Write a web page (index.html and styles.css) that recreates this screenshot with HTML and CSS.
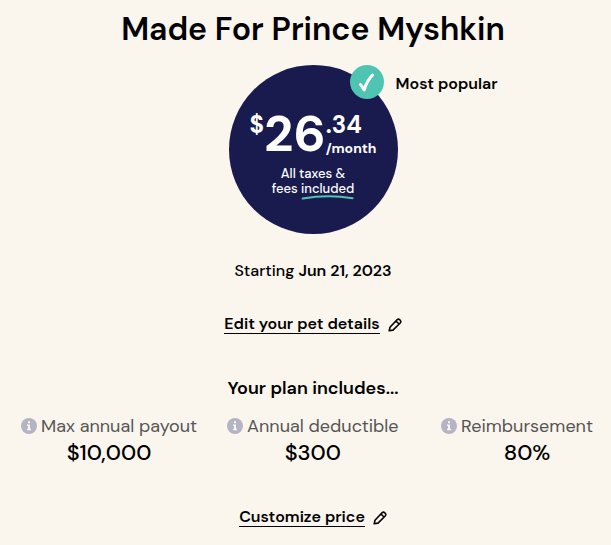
FILE: index.html
```html
<!DOCTYPE html>
<html lang="en">
<head>
  <meta charset="UTF-8" />
  <meta name="viewport" content="width=device-width, initial-scale=1.0" />
  <title>Made For Prince Myshkin</title>
  <link rel="stylesheet" href="styles.css">
</head>
<body>
  <main class="quote">
    <h1>Made For Prince Myshkin</h1>
    <div class="price-circle">
      <div class="price">
        <span class="currency">$</span>
        <span class="dollars">26</span>
        <span class="price-side">
          <span class="cents">.34</span>
          <span class="period">/month</span>
        </span>
      </div>
      <p class="taxes">All taxes &amp;<br>fees <span class="included">included<svg class="swoosh" viewBox="0 0 52 5" aria-hidden="true"><path d="M1 3.6Q26-.8 51 3.2" /></svg></span></p>
      <div class="popular">
        <svg class="check" viewBox="0 0 34 34" aria-hidden="true">
          <circle cx="17" cy="17" r="17" />
          <path d="M10.5 19.5L14.2 24.8Q16.5 16.5 22.5 10" />
        </svg>
        <span>Most popular</span>
      </div>
    </div>
    <p class="starting"><span>Starting</span> <strong>Jun 21, 2023</strong></p>
    <a href="#pet" class="edit-link edit-pet">
      <span>Edit your pet details</span>
      <svg class="pencil" viewBox="0 0 14 14" aria-hidden="true"><path d="M1.2 12.8L2 9.2L9 1.8Q10.4.6 11.8 1.8L12.2 2.2Q13.4 3.6 12.2 5L5 12.1ZM8.2 3.2L10.8 5.8" /></svg>
    </a>
    <h2>Your plan includes...</h2>
    <dl class="plan">
      <div class="plan-item">
        <dt><svg class="info" viewBox="0 0 16 16" aria-hidden="true"><circle cx="8" cy="8" r="8" /><path d="M7 3.2h2v2H7zM6 6.5h3v4.3h1v1.4H6v-1.4h1V7.9H6z" /></svg>Max annual payout</dt>
        <dd>$10,000</dd>
      </div>
      <div class="plan-item">
        <dt><svg class="info" viewBox="0 0 16 16" aria-hidden="true"><circle cx="8" cy="8" r="8" /><path d="M7 3.2h2v2H7zM6 6.5h3v4.3h1v1.4H6v-1.4h1V7.9H6z" /></svg>Annual deductible</dt>
        <dd>$300</dd>
      </div>
      <div class="plan-item">
        <dt><svg class="info" viewBox="0 0 16 16" aria-hidden="true"><circle cx="8" cy="8" r="8" /><path d="M7 3.2h2v2H7zM6 6.5h3v4.3h1v1.4H6v-1.4h1V7.9H6z" /></svg>Reimbursement</dt>
        <dd>80%</dd>
      </div>
    </dl>
    <a href="#price" class="edit-link">
      <span>Customize price</span>
      <svg class="pencil" viewBox="0 0 14 14" aria-hidden="true"><path d="M1.2 12.8L2 9.2L9 1.8Q10.4.6 11.8 1.8L12.2 2.2Q13.4 3.6 12.2 5L5 12.1ZM8.2 3.2L10.8 5.8" /></svg>
    </a>
  </main>
</body>
</html>
```
FILE: styles.css
```css
body {
  margin: 0;
  font-family: 'DM Sans', Inter, sans-serif;
  background: #faf5ed;
  color: #000;
}
h1, h2, p, dl, dd {
  margin: 0;
}
.quote {
  display: flex;
  flex-direction: column;
  align-items: center;
  padding: 9px 0 16px 15px;
}
h1 {
  font-size: 32px;
  line-height: 40px;
  font-weight: 600;
}
.price-circle {
  position: relative;
  display: flex;
  flex-direction: column;
  align-items: center;
  width: 169px;
  height: 169px;
  margin-top: 16px;
  border-radius: 50%;
  background: #191b4f;
  color: #fff;
}
.price {
  display: flex;
  margin-top: 44px;
  font-weight: 700;
}
.currency {
  font-size: 24px;
  line-height: 32px;
}
.dollars {
  font-size: 51px;
  line-height: 50px;
}
.price-side {
  display: flex;
  flex-direction: column;
}
.cents {
  font-size: 24px;
  line-height: 32px;
}
.period {
  font-size: 14px;
  line-height: 14px;
}
.taxes {
  margin-top: 7px;
  font-size: 13px;
  line-height: 15px;
  font-weight: 500;
  text-align: center;
}
.included {
  position: relative;
}
.swoosh {
  position: absolute;
  left: 0;
  top: 15px;
  width: 100%;
  height: 5px;
  fill: none;
  stroke: #4fc4b2;
  stroke-width: 2;
  stroke-linecap: round;
}
.popular {
  position: absolute;
  left: 121px;
  top: 0;
  display: flex;
  align-items: center;
  gap: 12px;
  color: #000;
  font-size: 16px;
  font-weight: 600;
  white-space: nowrap;
}
.popular span {
  padding-top: 2px;
}
.check {
  width: 34px;
  height: 34px;
  fill: #4fc4b2;
}
.check path {
  fill: none;
  stroke: #fff;
  stroke-width: 3;
  stroke-linecap: round;
  stroke-linejoin: round;
}
.starting {
  margin-top: 27px;
  font-size: 16px;
  line-height: 20px;
  font-weight: 500;
}
.starting strong {
  font-weight: 600;
}
.edit-link {
  display: flex;
  align-items: center;
  gap: 8px;
  color: #000;
  font-size: 16px;
  line-height: 18px;
  font-weight: 600;
  text-decoration: none;
}
.edit-link span {
  border-bottom: 1px solid #000;
}
.edit-pet {
  margin-top: 34px;
}
.pencil {
  width: 14px;
  height: 14px;
  fill: none;
  stroke: #000;
  stroke-width: 1.6;
  stroke-linejoin: round;
}
h2 {
  margin-top: 42px;
  font-size: 18px;
  line-height: 24px;
  font-weight: 600;
}
.plan {
  display: flex;
  align-self: stretch;
  gap: 30px;
  margin-top: 14px;
  padding: 0 18px 0 6px;
}
.plan-item {
  text-align: center;
}
.plan-item:last-child {
  margin-left: auto;
}
.plan-item:last-child dd {
  padding-left: 20px;
}
.plan dt {
  display: flex;
  align-items: center;
  gap: 4px;
  color: #555;
  font-size: 18px;
  line-height: 24px;
  white-space: nowrap;
}
.plan dd {
  font-size: 22px;
  line-height: 30px;
  font-weight: 500;
}
.info {
  width: 16px;
  height: 16px;
  fill: #b5b4c4;
}
.info path {
  fill: #faf5ed;
}
.plan + .edit-link {
  margin-top: 40px;
}
```
